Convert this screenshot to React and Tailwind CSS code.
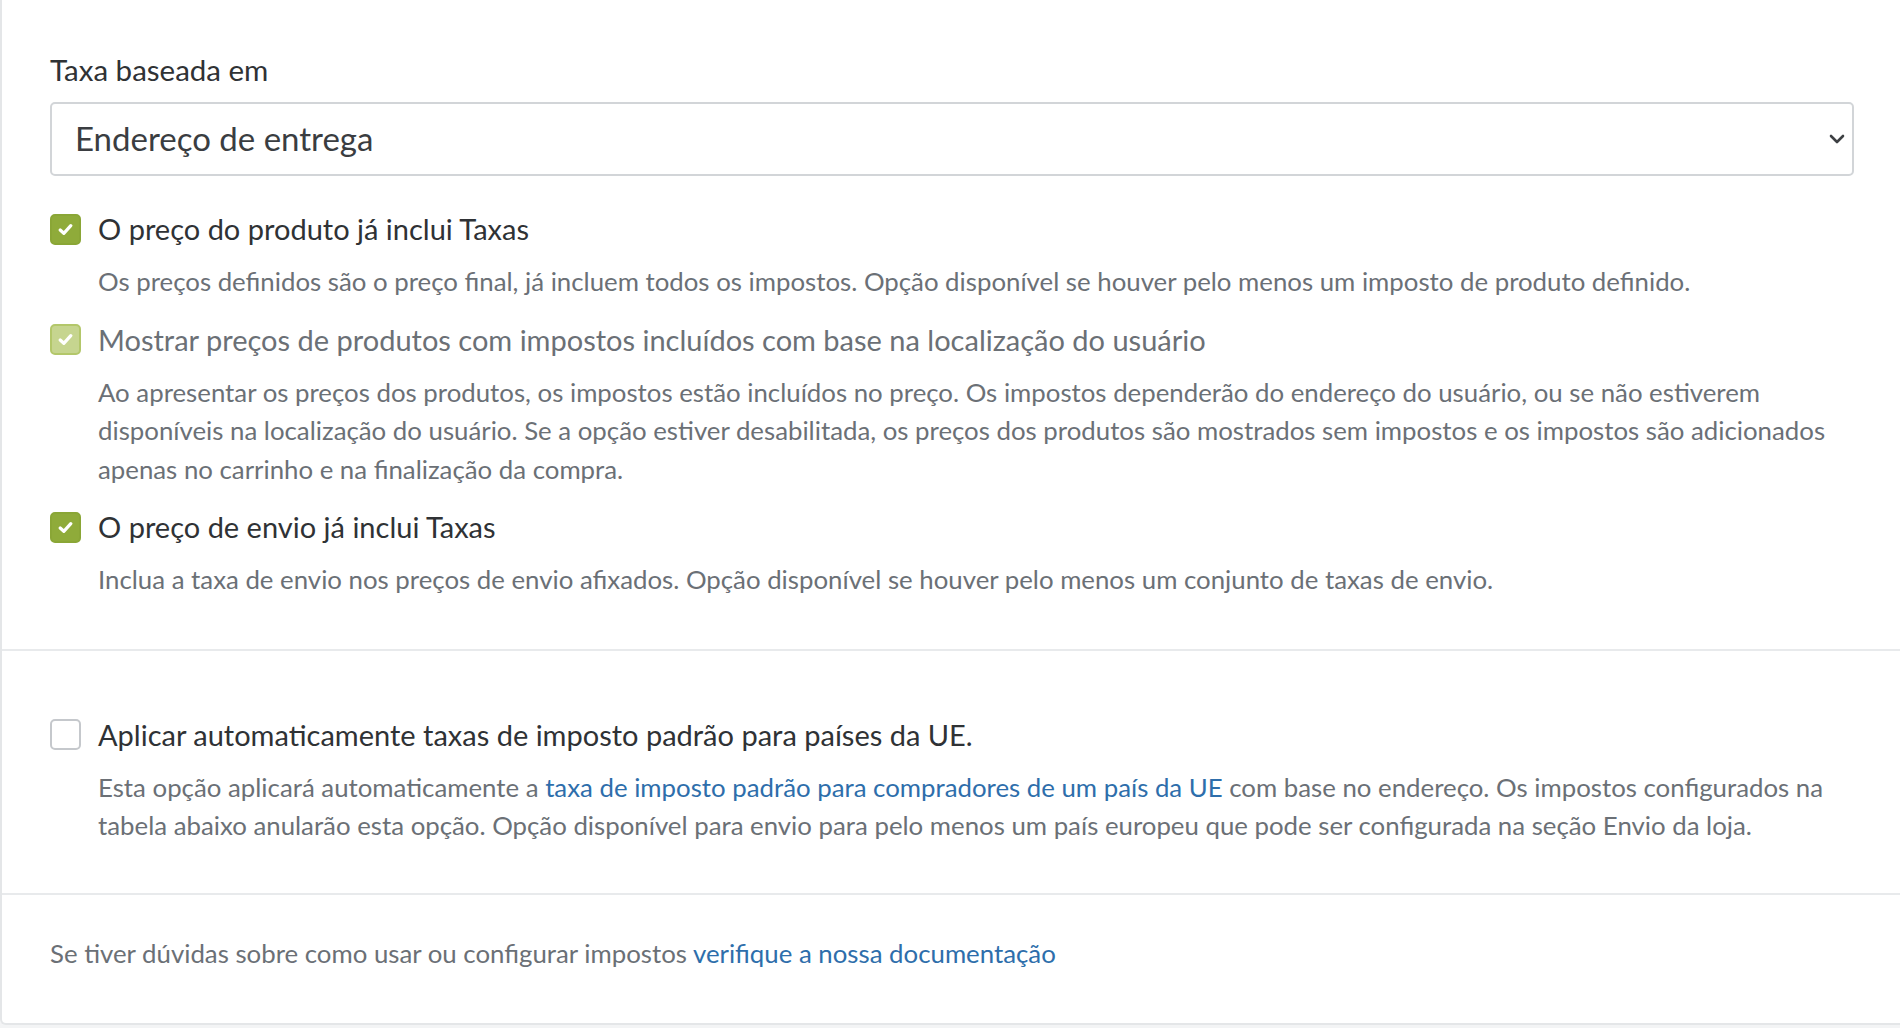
import React from "react";

const font = { fontFamily: '"Lato", "Open Sans", sans-serif' };

function Check({ state }) {
  if (state === "off") {
    return (
      <span className="w-[31px] h-[31px] shrink-0 rounded-[5px] border-2 border-[#c5c8cc] bg-white" />
    );
  }
  const cls =
    state === "disabled"
      ? "bg-[#c6d58f] border-2 border-[#b3c76a]"
      : "bg-[#8fab3a] border-2 border-[#8aa636]";
  return (
    <span className={`w-[31px] h-[31px] shrink-0 rounded-[5px] flex items-center justify-center ${cls}`}>
      <svg width="15" height="13" viewBox="0 0 15 13" fill="none">
        <path d="M2.2 7 L5.8 10.3 L12.8 2.6" stroke="white" strokeWidth="3.2" strokeLinecap="round" strokeLinejoin="round" />
      </svg>
    </span>
  );
}

function Option({ state, label, muted, children, className = "" }) {
  return (
    <div className={className}>
      <div className="flex items-center gap-[17px] h-[32px]">
        <Check state={state} />
        <span className={`text-[29px] leading-[32px] ${muted ? "text-[#6b7076]" : "text-[#2f3235]"}`}>{label}</span>
      </div>
      <p className="mt-[17px] pl-[48px] text-[25.8px] leading-[38.5px] text-[#6b7076]">{children}</p>
    </div>
  );
}

export default function App() {
  return (
    <div className="w-full h-[1028px] overflow-hidden bg-[#f3f4f5]" style={font}>
      <div className="w-[1910px] bg-white border-l-2 border-b-2 border-[#e4e6e8] rounded-bl-[6px]">
        {/* Base da taxa + opções de preço */}
        <section className="px-[48px] pt-[55px] pb-[50px]">
          <label className="block text-[29.5px] leading-[30px] text-[#2f3235]">Taxa baseada em</label>
          <div className="mt-[17px] w-[1804px] h-[74px] rounded-[5px] border-2 border-[#d2d5d8] flex items-center justify-between pl-[23px] pr-[7px]">
            <span className="text-[33px] text-[#3a3d41]">Endereço de entrega</span>
            <svg width="16" height="10" viewBox="0 0 16 10" fill="none">
              <path d="M2 2 L8 8 L14 2" stroke="#3d4043" strokeWidth="2.6" strokeLinecap="round" strokeLinejoin="round" />
            </svg>
          </div>

          <Option state="on" label="O preço do produto já inclui Taxas" className="mt-[37px]">
            Os preços definidos são o preço final, já incluem todos os impostos. Opção disponível se houver pelo menos um imposto de produto definido.
          </Option>
          <Option state="disabled" muted label="Mostrar preços de produtos com impostos incluídos com base na localização do usuário" className="mt-[23px]">
            Ao apresentar os preços dos produtos, os impostos estão incluídos no preço. Os impostos dependerão do endereço do usuário, ou se não estiverem disponíveis na localização do usuário. Se a opção estiver desabilitada, os preços dos produtos são mostrados sem impostos e os impostos são adicionados apenas no carrinho e na finalização da compra.
          </Option>
          <Option state="on" label="O preço de envio já inclui Taxas" className="mt-[23px]">
            Inclua a taxa de envio nos preços de envio afixados. Opção disponível se houver pelo menos um conjunto de taxas de envio.
          </Option>
        </section>

        {/* UE */}
        <section className="border-t-2 border-[#e8eaec] px-[48px] pt-[68px] pb-[48px]">
          <Option state="off" label="Aplicar automaticamente taxas de imposto padrão para países da UE.">
            Esta opção aplicará automaticamente a{" "}
            <a className="text-[#2e6eab]">taxa de imposto padrão para compradores de um país da UE</a> com base no endereço. Os impostos configurados na tabela abaixo anularão esta opção. Opção disponível para envio para pelo menos um país europeu que pode ser configurada na seção Envio da loja.
          </Option>
        </section>

        {/* Ajuda */}
        <section className="border-t-2 border-[#e8eaec] px-[48px] pt-[39px] pb-[51px]">
          <p className="text-[25.8px] leading-[38px] text-[#6b7076]">
            Se tiver dúvidas sobre como usar ou configurar impostos{" "}
            <a className="text-[#2e6eab]">verifique a nossa documentação</a>
          </p>
        </section>
      </div>
    </div>
  );
}
